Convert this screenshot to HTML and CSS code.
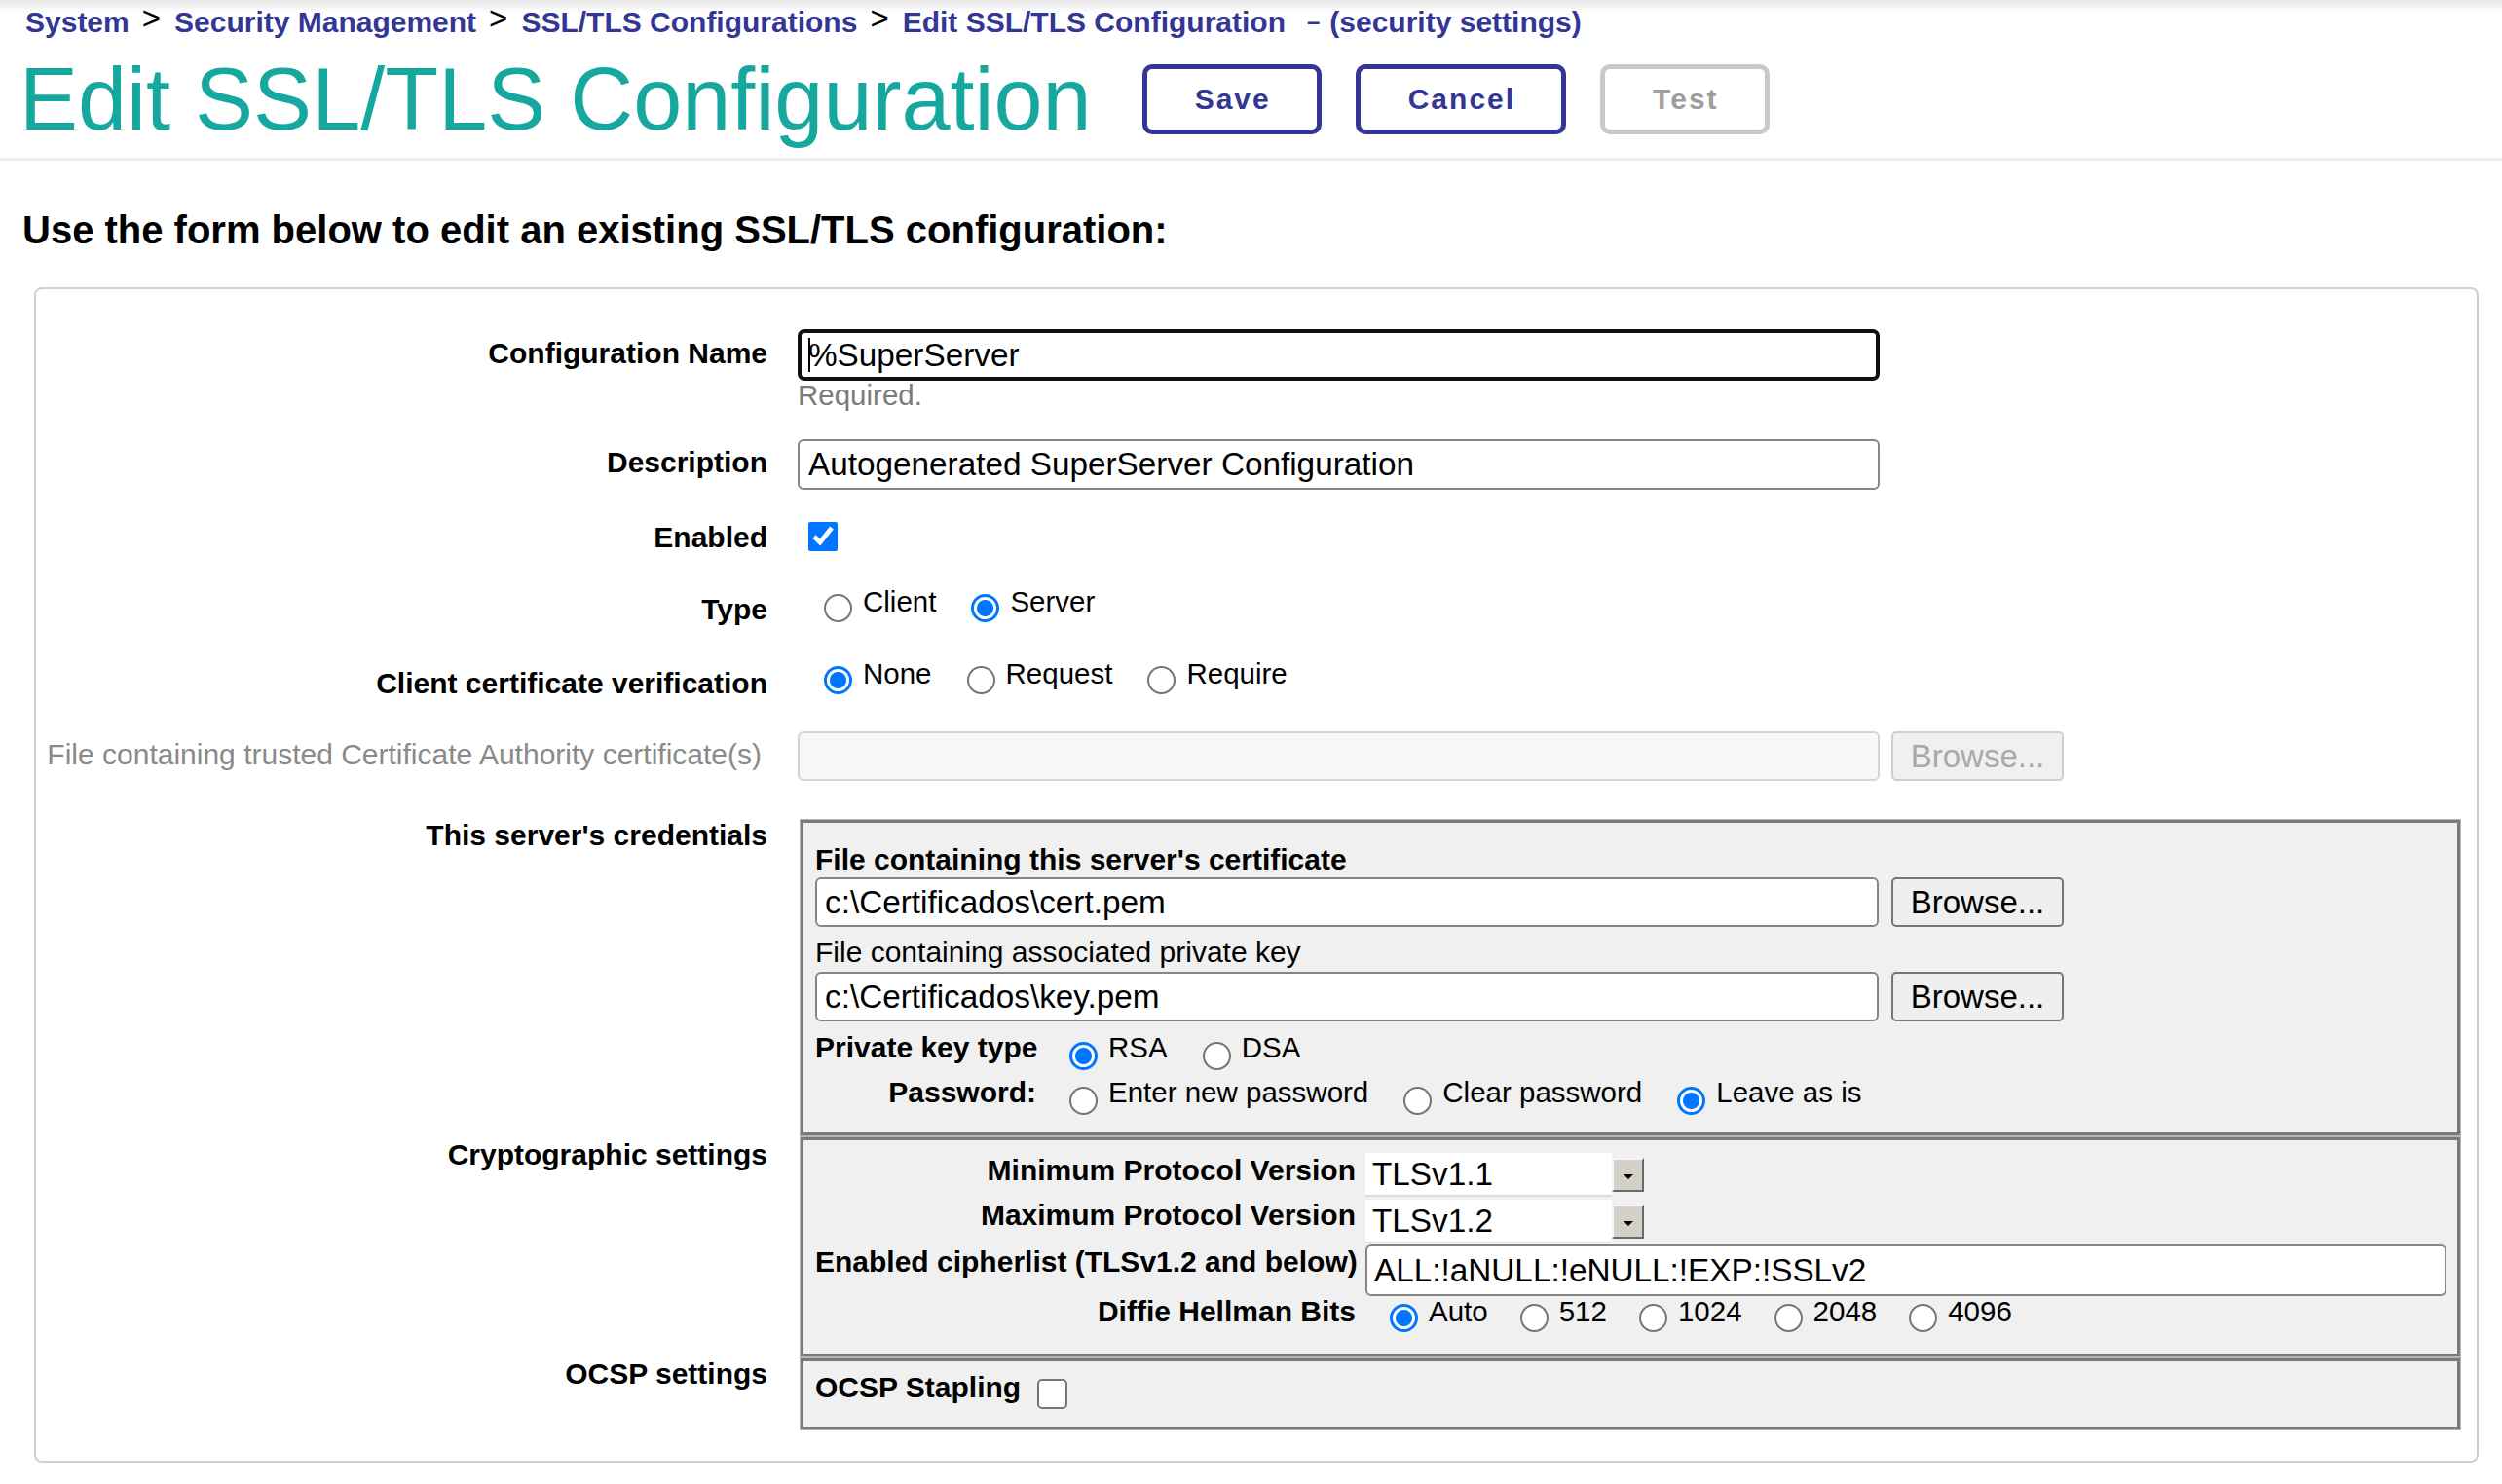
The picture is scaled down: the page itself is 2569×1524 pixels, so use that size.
FILE: index.html
```html
<!DOCTYPE html>
<html lang="en">
<head>
<meta charset="utf-8">
<title>Edit SSL/TLS Configuration</title>
<link rel="stylesheet" href="styles.css">
</head>
<body>
<header class="top">
  <nav class="crumbs">
    <a class="crumb">System</a><span class="sep">&gt;</span><a class="crumb">Security Management</a><span class="sep">&gt;</span><a class="crumb">SSL/TLS Configurations</a><span class="sep">&gt;</span><a class="crumb">Edit SSL/TLS Configuration</a><span class="dash">&ndash;</span><span class="ctx">(security settings)</span>
  </nav>
  <div class="title-row">
    <h1 class="title">Edit SSL/TLS Configuration</h1>
    <div class="actions">
      <button class="btn" type="button">Save</button>
      <button class="btn" type="button">Cancel</button>
      <button class="btn disabled" type="button">Test</button>
    </div>
  </div>
</header>

<p class="intro">Use the form below to edit an existing SSL/TLS configuration:</p>

<form class="panel">
  <div class="row">
    <div class="lbl p7">Configuration Name</div>
    <div class="ctl">
      <div class="inp focus"><span class="caret"></span>%SuperServer</div>
      <div class="hint">Required.</div>
    </div>
  </div>

  <div class="row gap30">
    <div class="lbl p6">Description</div>
    <div class="ctl">
      <input class="inp wide" type="text" value="Autogenerated SuperServer Configuration">
    </div>
  </div>

  <div class="row gap30">
    <div class="lbl p1">Enabled</div>
    <div class="ctl">
      <input class="chk enabled" type="checkbox" checked>
    </div>
  </div>

  <div class="row gap30">
    <div class="lbl p8">Type</div>
    <div class="ctl opts main">
      <label class="opt"><input class="rad" type="radio" name="type"><span>Client</span></label>
      <label class="opt"><input class="rad" type="radio" name="type" checked><span>Server</span></label>
    </div>
  </div>

  <div class="row gap30">
    <div class="lbl p10">Client certificate verification</div>
    <div class="ctl opts main">
      <label class="opt"><input class="rad" type="radio" name="verify" checked><span>None</span></label>
      <label class="opt"><input class="rad" type="radio" name="verify"><span>Request</span></label>
      <label class="opt"><input class="rad" type="radio" name="verify"><span>Require</span></label>
    </div>
  </div>

  <div class="row gap31">
    <div class="lbl p6 muted">File containing trusted Certificate Authority certificate(s)</div>
    <div class="ctl file-row main-file">
      <input class="inp wide ca" type="text" value="" disabled>
      <button class="browse" type="button" disabled>Browse...</button>
    </div>
  </div>

  <div class="row gap38">
    <div class="lbl">This server's credentials</div>
    <div class="ctl">
      <div class="group cred">
        <div class="sub-h">File containing this server's certificate</div>
        <div class="file-row">
          <input class="inp file" type="text" value="c:\Certificados\cert.pem">
          <button class="browse" type="button">Browse...</button>
        </div>
        <div class="sub-l">File containing associated private key</div>
        <div class="file-row second">
          <input class="inp file" type="text" value="c:\Certificados\key.pem">
          <button class="browse" type="button">Browse...</button>
        </div>
        <div class="keygrid">
          <div class="klbl">Private key type</div>
          <div class="opts key">
            <label class="opt"><input class="rad" type="radio" name="ktype" checked><span>RSA</span></label>
            <label class="opt"><input class="rad" type="radio" name="ktype"><span>DSA</span></label>
          </div>
          <div class="klbl">Password:</div>
          <div class="opts key">
            <label class="opt"><input class="rad" type="radio" name="pw"><span>Enter new password</span></label>
            <label class="opt"><input class="rad" type="radio" name="pw"><span>Clear password</span></label>
            <label class="opt"><input class="rad" type="radio" name="pw" checked><span>Leave as is</span></label>
          </div>
        </div>
      </div>
    </div>
  </div>

  <div class="row">
    <div class="lbl p2">Cryptographic settings</div>
    <div class="ctl">
      <div class="group crypto">
        <div class="crow">
          <div class="clbl">Minimum Protocol Version</div>
          <div class="sel"><span class="sel-val">TLSv1.1</span><span class="sel-btn"></span></div>
        </div>
        <div class="crow r2">
          <div class="clbl">Maximum Protocol Version</div>
          <div class="sel"><span class="sel-val">TLSv1.2</span><span class="sel-btn"></span></div>
        </div>
        <div class="crow r3">
          <div class="clbl">Enabled cipherlist (TLSv1.2 and below)</div>
          <div><input class="inp cipher" type="text" value="ALL:!aNULL:!eNULL:!EXP:!SSLv2"></div>
        </div>
        <div class="crow r4">
          <div class="clbl">Diffie Hellman Bits</div>
          <div class="opts dh">
            <label class="opt"><input class="rad" type="radio" name="dh" checked><span>Auto</span></label>
            <label class="opt"><input class="rad" type="radio" name="dh"><span>512</span></label>
            <label class="opt"><input class="rad" type="radio" name="dh"><span>1024</span></label>
            <label class="opt"><input class="rad" type="radio" name="dh"><span>2048</span></label>
            <label class="opt"><input class="rad" type="radio" name="dh"><span>4096</span></label>
          </div>
        </div>
      </div>
    </div>
  </div>

  <div class="row">
    <div class="lbl">OCSP settings</div>
    <div class="ctl">
      <div class="group ocsp">
        <span class="sub-h">OCSP Stapling</span>
        <input class="chk stapling" type="checkbox">
      </div>
    </div>
  </div>
</form>
</body>
</html>
```

FILE: styles.css
```css
* { box-sizing: border-box; }

html, body {
  margin: 0;
  padding: 0;
  background: #fff;
}

body {
  font-family: "Liberation Sans", Arial, Helvetica, sans-serif;
  color: #000;
  width: 2569px;
}

/* ---------- header ---------- */
.top {
  background: linear-gradient(to bottom, #e8e8e8 0, #ffffff 13px);
  border-bottom: 3px solid #eeeeee;
  padding: 6px 0 10px 0;
}

.crumbs {
  height: 34px;
  padding-left: 26px;
  font-size: 30px;
  line-height: 34px;
  font-weight: bold;
  color: #333695;
  white-space: nowrap;
}

.crumb { color: #333695; text-decoration: none; }

.sep {
  font-weight: normal;
  color: #000;
  font-size: 33px;
  line-height: 0;
  margin: 0 14px 0 13px;
  vertical-align: 3px;
}

.dash {
  font-size: 24px;
  line-height: 0;
  margin: 0 10px 0 22px;
  vertical-align: 3px;
}

.title-row {
  display: flex;
  align-items: center;
  height: 100px;
  margin-top: 12px;
  padding-left: 20px;
}

.title {
  margin: 0;
  font-size: 90px;
  line-height: 100px;
  font-weight: normal;
  color: #16a89f;
  white-space: nowrap;
}

.actions {
  display: flex;
  gap: 35px;
  margin-left: 52px;
}

.btn {
  font-family: inherit;
  font-size: 30px;
  font-weight: bold;
  letter-spacing: 2px;
  color: #333695;
  background: #fff;
  border: 5px solid #333695;
  border-radius: 10px;
  height: 72px;
  padding: 0 47px 0 49px;
}

.btn.disabled {
  color: #9e9e9e;
  border-color: #c9c9c9;
}

.intro {
  margin: 48px 0 0 23px;
  font-size: 40px;
  line-height: 46px;
  font-weight: bold;
}

/* ---------- panel ---------- */
.panel {
  margin: 36px 24px 0 35px;
  width: 2510px;
  border: 2px solid #cfcfcf;
  border-radius: 8px;
  padding: 41px 17px 32px 0;
}

.row {
  display: grid;
  grid-template-columns: 751px 1fr;
  column-gap: 31px;
  align-items: start;
}

.gap30 { margin-top: 30px; }
.gap31 { margin-top: 31px; }
.gap38 { margin-top: 38px; }

.lbl {
  text-align: right;
  font-weight: bold;
  font-size: 30px;
  line-height: 36px;
  white-space: nowrap;
}

.lbl.p1 { padding-top: 1px; }
.lbl.p2 { padding-top: 2px; }
.lbl.p6 { padding-top: 6px; }
.lbl.p7 { padding-top: 7px; }
.lbl.p8 { padding-top: 8px; }
.lbl.p10 { padding-top: 10px; }

.lbl.muted {
  font-weight: normal;
  color: #8a8a8a;
  padding-right: 6px;
}

/* ---------- inputs ---------- */
.inp {
  font-family: inherit;
  font-size: 33.3px;
  color: #000;
  background: #fff;
  border: 2px solid #858585;
  border-radius: 6px;
  padding: 0 0 0 9px;
  margin: 0;
  display: block;
}

.inp.wide { width: 1111px; height: 52px; }
.inp.ca { height: 51px; background: #f8f8f8; border-color: #d4d4d4; }

.inp.focus {
  display: flex;
  align-items: center;
  width: 1111px;
  height: 53px;
  border: 4px solid #101010;
  border-radius: 7px;
  padding-left: 7px;
  white-space: nowrap;
}

.caret {
  display: inline-block;
  width: 2px;
  height: 35px;
  background: #000;
  margin-right: -2px;
}

.hint {
  color: #7b7b7b;
  font-size: 29.5px;
  line-height: 30px;
}

.chk { margin: 0; }
.chk.enabled { width: 30px; height: 30px; margin: 3px 0 0 11px; display: block; }

.chk.stapling {
  appearance: none;
  -webkit-appearance: none;
  width: 31px;
  height: 31px;
  margin: 9px 0 0 17px;
  background: #fff;
  border: 2px solid #767676;
  border-radius: 5px;
}

.file-row {
  display: flex;
  gap: 13px;
}

.file-row.main-file { gap: 12px; }
.file-row.second { margin-top: 2px; }

.inp.file {
  width: 1092px;
  height: 51px;
  padding-left: 8px;
}

.browse {
  font-family: inherit;
  font-size: 33px;
  color: #000;
  width: 177px;
  height: 51px;
  background: #efefef;
  border: 2px solid #767676;
  border-radius: 5px;
  padding: 0;
}

.browse:disabled {
  color: #a9a9a9;
  background: #f0f0f0;
  border-color: #cfcfcf;
}

/* ---------- radio options ---------- */
.opts {
  display: flex;
  align-items: flex-start;
}

.opts.main { padding-left: 27px; }
.opts.key { padding-left: 34px; }
.opts.dh { padding-left: 25px; }

.opt {
  display: flex;
  align-items: flex-start;
  font-size: 29.5px;
  line-height: 36px;
  white-space: nowrap;
}

.opt + .opt { margin-left: 36px; }
.opts.dh .opt + .opt { margin-left: 33px; }

.rad {
  appearance: none;
  -webkit-appearance: none;
  width: 29px;
  height: 29px;
  margin: 10px 11px 0 0;
  flex: none;
  border: 2px solid #767676;
  border-radius: 50%;
  background: #fff;
}

.rad:checked {
  border: 3px solid #0075ff;
  background: radial-gradient(circle, #0075ff 0, #0075ff 8px, #ffffff 9px);
}

.opts.key .rad { margin-top: 12px; }

/* ---------- grouped boxes ---------- */
.group {
  border: 3px solid #7a7a7a;
  box-shadow: 0 0 0 1px #b6b6b6;
  background: #f0f0f0;
  margin: 2px 0 0 3px;
  padding-left: 12px;
}

.sub-h {
  font-weight: bold;
  font-size: 30px;
  line-height: 36px;
  white-space: nowrap;
}

.sub-l {
  font-size: 30px;
  line-height: 36px;
  margin-top: 8px;
}

.cred { padding-top: 20px; padding-bottom: 13px; }

.keygrid {
  display: grid;
  grid-template-columns: 227px 1fr;
  grid-auto-rows: 46px;
  margin-top: 9px;
}

.klbl {
  text-align: right;
  font-weight: bold;
  font-size: 30px;
  line-height: 36px;
  white-space: nowrap;
}

.crypto { padding-top: 13px; padding-bottom: 22px; }

.crow {
  display: grid;
  grid-template-columns: 555px 1fr;
  column-gap: 10px;
  align-items: start;
}

.crow.r2 { margin-top: 3px; }
.crow.r2 .clbl { margin-top: -2px; }
.crow.r3 { margin-top: 1px; }
.crow.r4 { margin-top: -2px; }

.clbl {
  text-align: right;
  font-weight: bold;
  font-size: 30px;
  line-height: 36px;
  white-space: nowrap;
}

.sel {
  display: flex;
  align-items: center;
  height: 45px;
}

.sel-val {
  width: 253px;
  height: 45px;
  background: #fff;
  border-bottom: 2px solid #dcdcdc;
  font-size: 33.3px;
  line-height: 44px;
  padding-left: 7px;
  white-space: nowrap;
}

.sel-btn {
  width: 33px;
  height: 35px;
  background: #d4d0c8;
  border-top: 2px solid #f4f4f4;
  border-left: 2px solid #f4f4f4;
  border-right: 2px solid #6a6a6a;
  border-bottom: 2px solid #6a6a6a;
  display: flex;
  align-items: center;
  justify-content: center;
}

.sel-btn::before {
  content: "";
  width: 0;
  height: 0;
  border-left: 5px solid transparent;
  border-right: 5px solid transparent;
  border-top: 5px solid #000;
  margin-top: 3px;
}

.inp.cipher {
  width: 1110px;
  height: 53px;
  padding-left: 7px;
}

.ocsp {
  display: flex;
  align-items: flex-start;
  padding: 9px 0 18px 12px;
}
```
